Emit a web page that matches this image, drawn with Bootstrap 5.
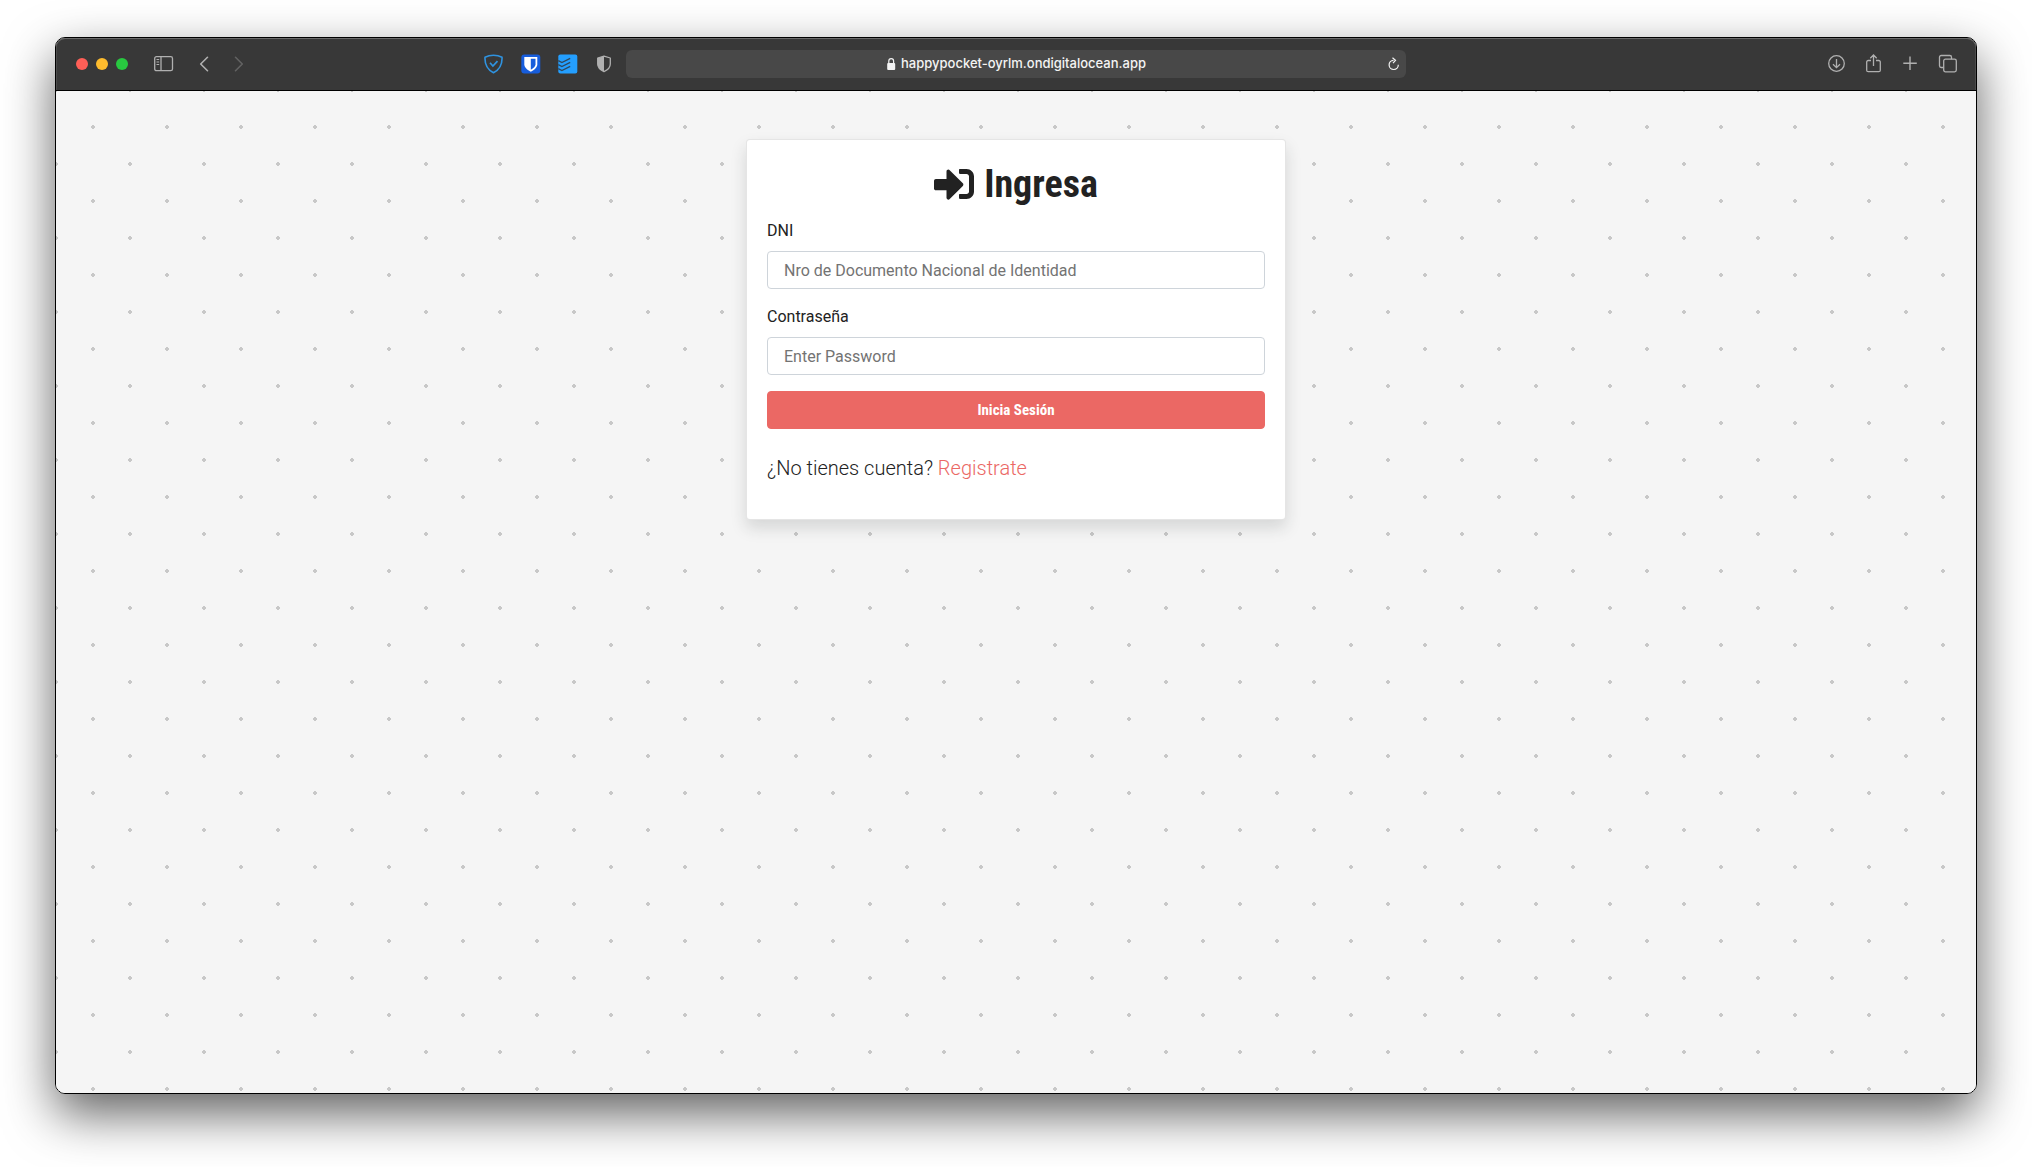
<!DOCTYPE html>
<html lang="es">
<head>
<meta charset="utf-8">
<meta name="viewport" content="width=device-width, initial-scale=1">
<title>Ingresa</title>
<link href="https://cdn.jsdelivr.net/npm/bootstrap@5.3.0/dist/css/bootstrap.min.css" rel="stylesheet">
<style>
  body {
    padding: 37px 55px 73px;
    background: #fff;
    color: #222;
    font-family: Roboto, Inter, sans-serif;
  }
  .browser {
    border: 1px solid #000;
    border-radius: 10px;
    box-shadow: 0 20px 50px rgba(0, 0, 0, .62);
  }
  .toolbar {
    height: 53px;
    padding: 0 18px;
    background: #383838;
    border-bottom: 1px solid #000;
    border-radius: 9px 9px 0 0;
    box-shadow: inset 0 1px 0 #6a6a6a, inset 1px 0 0 #4c4c4c, inset -1px 0 0 #4c4c4c;
    color: #b0b0b0;
  }
  .toolbar svg { display: block; fill: none; stroke: currentColor; }
  .tool { padding: 0; border: 0; background: none; color: inherit; }
  .tool:disabled { color: #626262; }
  .lights { gap: 8px; margin: 0 26px 0 2px; }
  .light { width: 12px; height: 12px; padding: 0; border: 0; border-radius: 50%; }
  .light-close { background: #ff5f57; }
  .light-min { background: #febc2e; }
  .light-max { background: #28c840; }
  .history { gap: 19px; margin-left: 22px; }
  .side { flex: 1 1 0; min-width: 0; }
  .tools { gap: 17px; }
  .extensions { margin-right: 11px; }
  .toolbar .shield { stroke: #2f93e0; }
  .address {
    flex: 0 1 780px;
    height: 28px;
    padding: 0 6px;
    border-radius: 6px;
    background: #484848;
    color: #f4f4f4;
    font-family: Inter, Roboto, sans-serif;
    font-size: 13px;
    font-weight: 500;
  }
  .address-gap { width: 12px; }
  .page {
    padding: 48px 12px;
    border-radius: 0 0 9px 9px;
    background-color: #f5f5f5;
    background-image:
      radial-gradient(circle, #c8c8c8 2px, transparent 2px),
      radial-gradient(circle, #c8c8c8 2px, transparent 2px);
    background-size: 74px 74px;
    background-position: 0 -1px, -37px -38px;
  }
  .login { width: 100%; max-width: 540px; border-color: rgba(0, 0, 0, .1); border-radius: 4px; color: #222; }
  .login-body { padding: 20px; font-size: 16px; line-height: 24px; }
  .login-title {
    gap: 10px;
    margin-bottom: 11px;
    font-family: "Roboto Condensed", "Liberation Sans Narrow", Roboto, sans-serif;
    font-size: 38px;
    font-weight: 700;
    line-height: 48px;
  }
  .title-icon { width: 40px; height: 40px; fill: currentColor; }
  .field { height: 38px; padding: 6px 16px; border-color: #ced4da; border-radius: 4px; font-size: 16px; }
  .field::placeholder { color: #737373; }
  .enter {
    --bs-btn-bg: #eb6864; --bs-btn-border-color: #eb6864; --bs-btn-color: #fff;
    --bs-btn-hover-bg: #e74944; --bs-btn-hover-border-color: #e64540; --bs-btn-hover-color: #fff;
    height: 38px;
    border-radius: 4px;
    font-family: "Roboto Condensed", "Liberation Sans Narrow", Roboto, sans-serif;
    font-size: 15px;
    font-weight: 700;
  }
  .signup { font-size: 20px; line-height: 30px; }
  .signup a { color: #eb6864; }
</style>
</head>
<body class="min-vh-100 d-flex flex-column">
<div class="browser flex-grow-1 d-flex flex-column">
  <header class="toolbar d-flex align-items-center">
    <div class="side d-flex align-items-center">
      <div class="lights d-flex">
        <button type="button" class="light light-close" aria-label="Cerrar"></button>
        <button type="button" class="light light-min" aria-label="Minimizar"></button>
        <button type="button" class="light light-max" aria-label="Maximizar"></button>
      </div>
      <button type="button" class="tool" aria-label="Barra lateral">
        <svg width="20" height="16" viewBox="0 0 20 16"><rect x=".7" y=".7" width="17.800" height="14" rx="1.800" stroke-width="1.300"/><path d="M7 .7v14" stroke-width="1.300"/><path d="M2.500 3.500h2.700M2.500 6h2.700M2.500 8.500h2.700"/></svg>
      </button>
      <div class="history d-flex">
        <button type="button" class="tool" aria-label="Atrás">
          <svg width="16" height="18" viewBox="0 0 16 18"><path d="M11.500 2.300 4.700 9l6.800 6.700" stroke-width="1.600" stroke-linecap="round" stroke-linejoin="round"/></svg>
        </button>
        <button type="button" class="tool" aria-label="Adelante" disabled>
          <svg width="16" height="18" viewBox="0 0 16 18"><path d="m4.500 2.300 6.800 6.700-6.800 6.700" stroke-width="1.600" stroke-linecap="round" stroke-linejoin="round"/></svg>
        </button>
      </div>
      <div class="tools extensions d-flex ms-auto">
        <button type="button" class="tool" aria-label="Protección">
          <svg class="shield" width="20" height="20" viewBox="0 0 20 20"><path d="M9.500 1.200C6.800 1.200 3.300 2 1 3.200c-.4 7 1.700 12.200 8.500 15.600C16.300 15.400 18.400 10.200 18 3.200 15.700 2 12.200 1.200 9.500 1.200z" stroke-width="1.600" stroke-linejoin="round"/><path d="m6 8.800 2.900 3.300 4.600-5" stroke-width="1.700"/></svg>
        </button>
        <button type="button" class="tool" aria-label="Contraseñas">
          <svg width="20" height="20" viewBox="0 0 20 20"><g stroke="none"><rect x=".3" y=".5" width="19" height="19" rx="3" fill="#175ddc"/><path d="M3.300 3h13v7.300c0 3.200-3 5.700-6.500 7.400-3.500-1.700-6.500-4.200-6.500-7.400z" fill="#fff"/><path d="M9.800 4.800h4.700v5.500c0 2.300-2 4-4.700 5.400z" fill="#175ddc"/></g></svg>
        </button>
        <button type="button" class="tool" aria-label="Tareas">
          <svg width="20" height="20" viewBox="0 0 20 20"><rect x=".3" y=".5" width="19" height="19" rx="2" fill="#249fff" stroke="none"/><path d="m.3 6.500 3.600 2 8.300-4.200M.3 10.500l3.600 2 8.300-4.200M.3 14.500l3.600 2 8.300-4.200" stroke="#30485c" stroke-width="1.400"/></svg>
        </button>
        <button type="button" class="tool" aria-label="Informe de privacidad">
          <svg width="20" height="20" viewBox="0 0 20 20"><path d="M9 2.200 15.300 4v6c0 3.600-2.600 5.900-6.300 7.600C5.300 15.900 2.700 13.600 2.700 10V4z" stroke-width="1.300" stroke-linejoin="round"/><path d="M9 2.200v15.400C5.300 15.900 2.700 13.600 2.700 10V4z" fill="currentColor" stroke="none"/></svg>
        </button>
      </div>
    </div>
    <div class="address d-flex align-items-center justify-content-between">
      <span class="address-gap"></span>
      <div class="d-flex align-items-center">
        <svg class="me-1" width="11" height="14" viewBox="0 0 11 14"><rect x="1.200" y="6" width="8" height="7" rx="1" fill="currentColor" stroke="none"/><path d="M2.800 6.500V4c0-3.200 4.800-3.200 4.800 0v2.500" stroke-width="1.200"/></svg>
        <span>happypocket-oyrlm.ondigitalocean.app</span>
      </div>
      <button type="button" class="tool" aria-label="Recargar">
        <svg width="12" height="14" viewBox="0 0 12 14"><path d="M5.500 3.300a4.600 4.600 0 1 0 4.800 4.500M4.500.8l3 2.600L5 6.200" stroke-width="1.200"/></svg>
      </button>
    </div>
    <div class="side tools d-flex align-items-center justify-content-end">
      <button type="button" class="tool" aria-label="Descargas">
        <svg width="20" height="20" viewBox="0 0 20 20" stroke-width="1.300"><circle cx="9.500" cy="9.500" r="7.800"/><path d="M9.500 5v8.500M6 10.200l3.500 3.500 3.500-3.500"/></svg>
      </button>
      <button type="button" class="tool" aria-label="Compartir">
        <svg width="20" height="20" viewBox="0 0 20 20" stroke-width="1.300"><path d="M7 6.500H4.200a1.500 1.500 0 0 0-1.500 1.500v8.200a1.500 1.500 0 0 0 1.500 1.500h10.600a1.500 1.500 0 0 0 1.500-1.500V8a1.500 1.500 0 0 0-1.500-1.500H12M9.500 12V1M6.300 4.200 9.500 1l3.200 3.200"/></svg>
      </button>
      <button type="button" class="tool" aria-label="Nueva pestaña">
        <svg width="20" height="20" viewBox="0 0 20 20" stroke-width="1.400"><path d="M9 2.500v13.500M2.300 9.300h13.500"/></svg>
      </button>
      <button type="button" class="tool" aria-label="Pestañas">
        <svg width="20" height="20" viewBox="0 0 20 20" stroke-width="1.300"><path d="M5.700 13.500H3.200a1.700 1.700 0 0 1-1.700-1.700V3.200a1.700 1.700 0 0 1 1.700-1.700h8.600a1.700 1.700 0 0 1 1.700 1.700v2"/><rect x="5.700" y="5.200" width="12.600" height="12.600" rx="1.700"/></svg>
      </button>
    </div>
  </header>
  <main class="page flex-grow-1 d-flex justify-content-center align-items-start">
    <section class="login card shadow">
      <div class="login-body">
        <h1 class="login-title d-flex justify-content-center align-items-center">
          <svg class="title-icon" viewBox="0 0 512 512"><path d="M416 448h-84c-6.600 0-12-5.400-12-12v-40c0-6.600 5.400-12 12-12h84c17.700 0 32-14.300 32-32V160c0-17.700-14.300-32-32-32h-84c-6.600 0-12-5.400-12-12V76c0-6.600 5.400-12 12-12h84c53 0 96 43 96 96v192c0 53-43 96-96 96zm-47-201L201 79c-15-15-41-4.500-41 17v96H24c-13.300 0-24 10.700-24 24v96c0 13.300 10.700 24 24 24h136v96c0 21.500 26 32 41 17l168-168c9.300-9.400 9.300-24.600 0-34z"/></svg>
          <span>Ingresa</span>
        </h1>
        <form>
          <div class="mb-3">
            <label for="dni" class="form-label">DNI</label>
            <input id="dni" type="text" class="form-control field" placeholder="Nro de Documento Nacional de Identidad">
          </div>
          <div class="mb-3">
            <label for="clave" class="form-label">Contraseña</label>
            <input id="clave" type="password" class="form-control field" placeholder="Enter Password">
          </div>
          <button type="submit" class="btn enter w-100">Inicia Sesión</button>
        </form>
        <p class="signup fw-light mt-4 mb-3">¿No tienes cuenta? <a href="#" class="text-decoration-none">Registrate</a></p>
      </div>
    </section>
  </main>
</div>
<script src="https://cdn.jsdelivr.net/npm/bootstrap@5.3.0/dist/js/bootstrap.bundle.min.js"></script>
</body>
</html>
